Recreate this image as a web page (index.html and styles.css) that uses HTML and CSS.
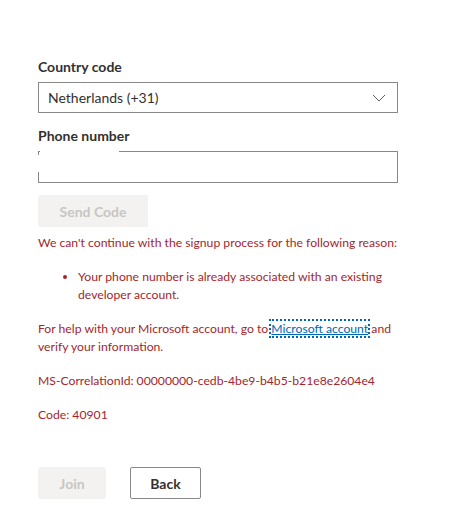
FILE: index.html
```html
<!DOCTYPE html>
<html lang="en">
<head>
  <meta charset="UTF-8">
  <meta name="viewport" content="width=device-width, initial-scale=1.0">
  <title>Phone verification</title>
  <link rel="stylesheet" href="styles.css">
</head>
<body>
  <div class="form">
    <label class="field-label">Country code</label>
    <div class="select">
      <span>Netherlands (+31)</span>
      <svg class="chevron" width="14" height="8" viewBox="0 0 14 8">
        <path d="M1 1 L7 7 L13 1" fill="none" stroke="#605e5c" stroke-width="1"/>
      </svg>
    </div>

    <label class="field-label">Phone number</label>
    <div class="input">
      <div class="mask"></div>
      <div class="mask-side"></div>
    </div>

    <button class="btn btn-disabled send">Send Code</button>

    <div class="error">
      <p>We can't continue with the signup process for the following reason:</p>
      <ul>
        <li>Your phone number is already associated with an existing developer account.</li>
      </ul>
      <p>For help with your Microsoft account, go to <a href="#" class="focus">Microsoft account</a> and verify your information.</p>
      <p>MS-CorrelationId: 00000000-cedb-4be9-b4b5-b21e8e2604e4</p>
      <p>Code: 40901</p>
    </div>

    <div class="actions">
      <button class="btn btn-disabled join">Join</button>
      <button class="btn btn-outline">Back</button>
    </div>
  </div>
</body>
</html>
```

FILE: styles.css
```css
body {
  margin: 0;
  background-color: #fff;
  font-family: 'Lato', 'Noto Sans', sans-serif;
  color: #323130;
}

.form {
  width: 360px;
  padding: 57px 0 0 38px;
}

.field-label {
  display: block;
  font-size: 14px;
  font-weight: 700;
  line-height: 20px;
  margin-bottom: 5px;
}

.select {
  height: 31px;
  box-sizing: border-box;
  border: 1px solid #8a8886;
  display: flex;
  align-items: center;
  justify-content: space-between;
  padding: 0 11px 0 9px;
  font-size: 14px;
  margin-bottom: 13px;
}

.input {
  position: relative;
  height: 32px;
  box-sizing: border-box;
  border: 1px solid #8a8886;
  margin-bottom: 12px;
}

/* blanked-out area over the phone field */
.mask,
.mask-side {
  position: absolute;
  background-color: #fff;
}

.mask {
  left: 1px;
  top: -2px;
  width: 79px;
  height: 8px;
}

.mask-side {
  left: -2px;
  top: 3px;
  width: 10px;
  height: 17px;
}

.btn {
  font-family: inherit;
  font-size: 14px;
  font-weight: 700;
  height: 32px;
  border-radius: 2px;
  padding: 0;
}

.btn-disabled {
  background-color: #f3f2f1;
  color: #c8c6c4;
  border: none;
}

.send {
  width: 110px;
  display: block;
}

.join {
  width: 68px;
}

.btn-outline {
  width: 71px;
  background-color: #fff;
  border: 1px solid #8a8886;
  color: #323130;
}

.error {
  color: #a4262c;
  font-size: 12.2px;
  line-height: 18px;
  padding-top: 7px;
}

.error p {
  margin: 0 0 16px;
}

.error ul {
  margin: 0 0 16px;
  padding-left: 40px;
}

.focus {
  color: #0067b8;
  outline: 2px dotted #0067b8;
}

.actions {
  display: flex;
  gap: 24px;
  margin-top: 43px;
}
```
